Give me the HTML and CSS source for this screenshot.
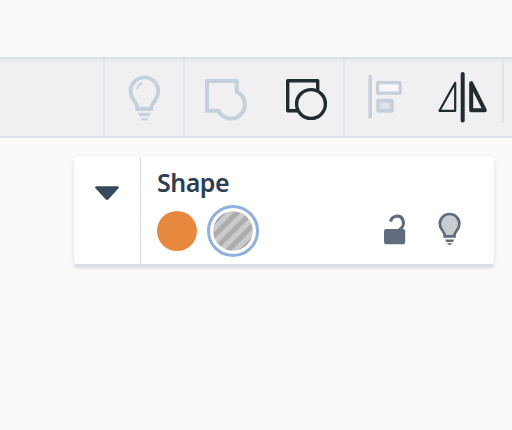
FILE: index.html
```html
<!DOCTYPE html>
<html lang="en">
<head>
<meta charset="utf-8">
<title>Shapes</title>
<link rel="stylesheet" href="styles.css">
</head>
<body>
<header class="toolbar">
  <div class="group">
    <svg class="muted" width="78" height="78" viewBox="105 59 78 78">
      <path d="M137.300 109V106.800C137 102.500 130.600 99.500 130.600 91.100A13.800 13.800 0 0 1 158.200 91.100C158.200 99.500 151.900 102.500 151.600 106.800V109Z" stroke-width="3.800"/>
      <path d="M137.200 88.400Q138.200 84.500 141.600 83.300" stroke-width="1.800" stroke-linecap="round"/>
      <path class="fill" d="M138 112.700H151L149.500 116.200H139.500ZM140 118.300H149Q147 120.800 144.500 120.800Q142 120.800 140 118.300Z"/>
    </svg>
  </div>
  <div class="group">
    <svg width="158" height="78" viewBox="185 59 158 78">
      <path class="muted" d="M207 81H236.700V91.800A14 14 0 1 1 218.300 110.700H207Z" stroke-width="4" stroke-linejoin="round"/>
      <g class="dark" stroke-width="3.400">
        <path d="M297.500 110.800H287.700V80.800H317.700V91.500" stroke-linejoin="round"/>
        <circle cx="311" cy="104" r="14.400"/>
      </g>
    </svg>
  </div>
  <div class="group">
    <svg width="157" height="78" viewBox="345 59 157 78">
      <g class="muted">
        <path d="M370.200 76.500V117" stroke-width="3.600" stroke-linecap="round"/>
        <rect x="377.600" y="82.600" width="22.600" height="10.600" stroke-width="3.200" stroke-linejoin="round" fill="#f7f7fa"/>
        <rect x="378.200" y="100.700" width="13.600" height="10" stroke-width="4" stroke-linejoin="round" fill="#dfe3e9"/>
      </g>
      <g class="dark" stroke-linejoin="round">
        <path d="M462.700 74V120.500" stroke-width="4" stroke-linecap="round"/>
        <path d="M455.200 82.800V110.800H439.500Z" stroke-width="2.200"/>
        <path d="M471.200 83.200V110.200H484.800Z" stroke-width="4"/>
      </g>
    </svg>
  </div>
  <div class="group last"></div>
</header>
<main>
  <section class="card">
    <div class="toggle">
      <svg width="26" height="16" viewBox="0 0 26 16"><path d="M2.500 1.200H23.500C25 1.200 25.300 2.400 24.500 3.200L14.500 14.200Q13 15.700 11.500 14.200L1.500 3.200C.7 2.400 1 1.200 2.500 1.200Z" fill="#38495c"/></svg>
    </div>
    <div class="body">
      <h1>Shape</h1>
      <div class="row">
        <span class="swatch"></span>
        <span class="ring">
          <svg width="40" height="40" viewBox="0 0 40 40">
            <defs><pattern id="hatch" width="10" height="10" patternUnits="userSpaceOnUse" patternTransform="rotate(45) translate(5.800 0)"><rect width="10" height="10" fill="#cbcbcb"/><rect width="5" height="10" fill="#acacac"/></pattern></defs>
            <circle cx="20" cy="20" r="19.800" fill="url(#hatch)"/>
          </svg>
        </span>
        <svg class="controls" width="80" height="40" viewBox="382 211 80 40">
          <rect x="384" y="229" width="21.200" height="15.200" rx="2.200" fill="#5f6c7e"/>
          <path d="M390.500 221.500C392 215.500 400 214.200 402.600 219.200C404.600 223.200 403 227.500 399 230" fill="none" stroke="#5f6c7e" stroke-width="3.200"/>
          <path d="M444.700 236.300V234.800C444.400 231.500 439.800 229.500 439.800 223.800A9.800 9.800 0 0 1 459.400 223.800C459.400 229.500 454.800 231.500 454.500 234.800V236.300Z" fill="#c8cbd0" stroke="#5f6c7e" stroke-width="2.700"/>
          <path d="M445.200 239.600H454.200L453 242H446.400ZM446.800 243.300H452.600Q451 245 449.700 245Q448.200 245 446.800 243.300Z" fill="#5f6c7e"/>
        </svg>
      </div>
    </div>
  </section>
</main>
</body>
</html>
```
FILE: styles.css
```css
* { box-sizing: border-box; }
body {
  margin: 0;
  padding-top: 57px;
  height: 430px;
  overflow: hidden;
  background: #fafafa;
  font-family: "Noto Sans", sans-serif;
}
.toolbar {
  display: flex;
  height: 81px;
  padding-left: 103px;
  border-top: 2px solid #dadfe6;
  border-bottom: 2px solid #dfe2e8;
  background: linear-gradient(#e7eaef, #f0f0f3 5px);
}
.group {
  flex: none;
  height: 77px;
  border-left: 2px solid #e1e4ea;
}
.group svg { display: block; }
.last { height: 64px; }
.muted { fill: none; stroke: #c6d0da; }
.muted .fill { fill: #c6d0da; stroke: none; }
.dark { fill: none; stroke: #202c2e; }
.card {
  display: flex;
  width: 420px;
  height: 107px;
  margin: 19px 0 0 74px;
  border-radius: 3px;
  background: #fff;
  box-shadow: 0 4px 3px #d9dde3, 0 2px 7px #e9ebee;
}
.toggle {
  width: 67px;
  padding: 27px 0 0 20px;
  border-right: 1px solid #d8dbe0;
}
.body { flex: 1; padding: 9px 32px 0 16px; }
h1 {
  margin: 0;
  color: #2c3e53;
  font-size: 25px;
  font-weight: 600;
  letter-spacing: -.5px;
  line-height: 32px;
}
.row { display: flex; align-items: center; margin-top: 7px; }
.swatch {
  width: 40px;
  height: 40px;
  border-radius: 50%;
  background: #e6883d;
}
.ring {
  display: grid;
  place-items: center;
  width: 52px;
  height: 52px;
  margin-left: 10px;
  border: 3px solid #91b0e0;
  border-radius: 50%;
}
.controls { margin-left: auto; }
```
